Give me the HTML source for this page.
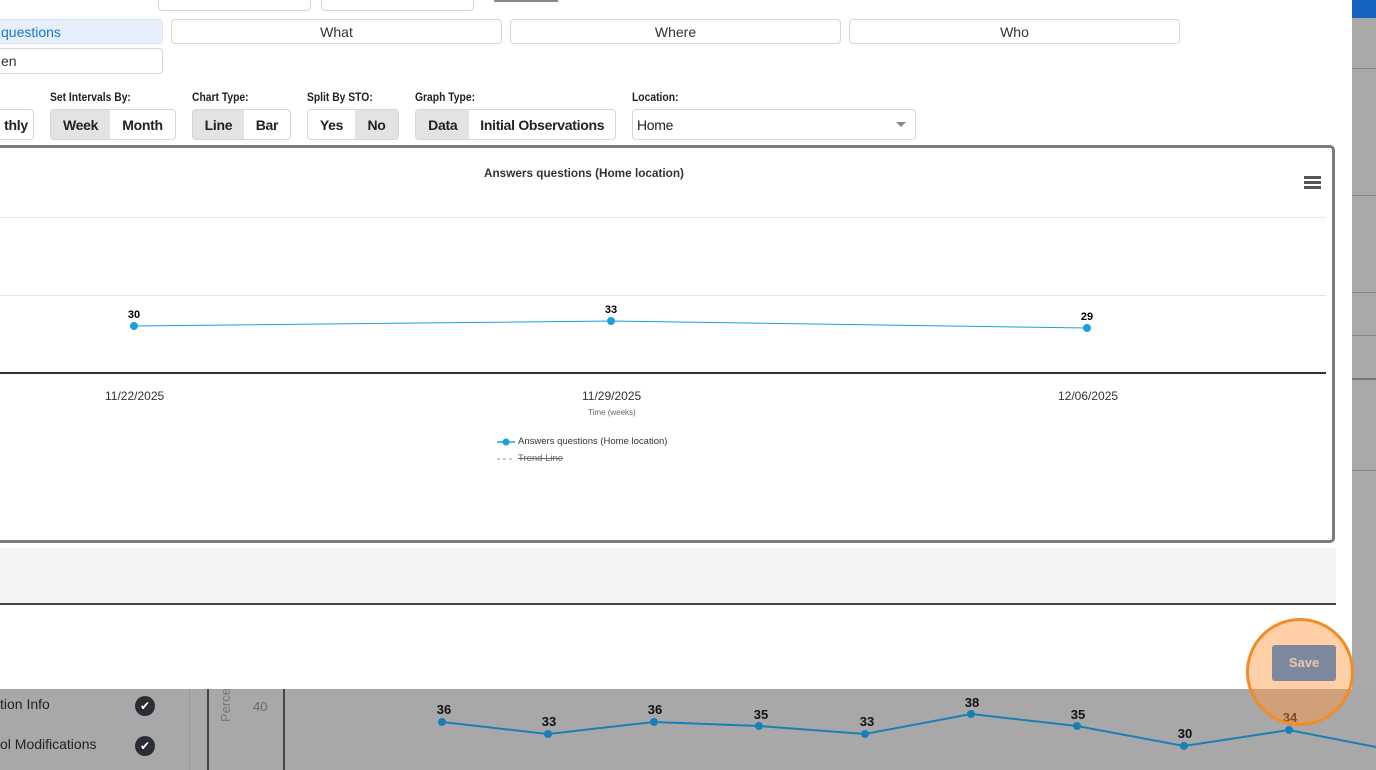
<!DOCTYPE html>
<html><head><meta charset="utf-8"><style>
*{box-sizing:border-box;margin:0;padding:0}
body{width:1376px;height:770px;overflow:hidden;position:relative;background:#a9a9a9;font-family:"Liberation Sans",sans-serif;color:#222}
.abs{position:absolute}
.modal{position:absolute;left:0;top:0;width:1352px;height:689px;background:#fff}
.box{position:absolute;border:1px solid #d6d6d6;border-radius:4px;background:#fff;font-size:14px;text-align:center;line-height:24px;color:#333}
.lbl{position:absolute;font-size:12px;font-weight:bold;color:#222;top:90px;transform:scaleX(.86);transform-origin:left}
.grp{position:absolute;top:109px;height:31px;border:1px solid #d6d6d6;border-radius:4px;display:flex;overflow:hidden;font-size:14px;font-weight:bold}
.grp span{display:flex;align-items:center;justify-content:center;height:100%;letter-spacing:-.3px}
.on{background:#e3e3e3}
</style></head><body>
<div class="abs" style="left:1352px;top:0;width:24px;height:18px;background:#1565c0"></div>
<div class="abs" style="left:1352px;top:68px;width:24px;height:1px;background:#888"></div>
<div class="abs" style="left:1352px;top:195px;width:24px;height:1px;background:#888"></div>
<div class="abs" style="left:1352px;top:292px;width:24px;height:1px;background:#888"></div>
<div class="abs" style="left:1352px;top:335px;width:24px;height:1px;background:#888"></div>
<div class="abs" style="left:1352px;top:378px;width:24px;height:2px;background:#777"></div>
<div class="abs" style="left:1352px;top:470px;width:24px;height:1px;background:#888"></div>
<div class="abs" style="left:0;top:689px;width:1376px;height:81px;background:#a8a8a8"></div>
<div class="abs" style="left:0;top:696px;font-size:14px;color:#222">tion Info</div>
<div class="abs" style="left:0;top:736px;font-size:14px;color:#222">ol Modifications</div>
<div class="abs" style="left:135px;top:696px;width:20px;height:20px;border-radius:50%;background:#2a2d33;color:#fff;font-size:12px;text-align:center;line-height:20px">✔</div>
<div class="abs" style="left:135px;top:736px;width:20px;height:20px;border-radius:50%;background:#2a2d33;color:#fff;font-size:12px;text-align:center;line-height:20px">✔</div>
<div class="abs" style="left:189px;top:689px;width:1px;height:81px;background:#999"></div>
<div class="abs" style="left:207px;top:689px;width:2px;height:81px;background:#444"></div>
<div class="abs" style="left:283px;top:689px;width:2px;height:81px;background:#444"></div>
<div class="abs" style="left:218px;font-size:13px;color:#777;transform:rotate(-90deg);transform-origin:left top;top:722px">Perce</div>
<div class="abs" style="left:253px;top:699px;font-size:13px;color:#666">40</div>
<svg class="abs" style="left:0;top:689px" width="1376" height="81">
<polyline fill="none" stroke="#1a7fb5" stroke-width="2" points="442,33 548,45 654,33 759,37 865,45 971,25 1077,37 1184,57 1289,41 1376,58"/>
<g fill="#1a7fb5"><circle cx="442" cy="33" r="4"/><circle cx="548" cy="45" r="4"/><circle cx="654" cy="33" r="4"/><circle cx="759" cy="37" r="4"/><circle cx="865" cy="45" r="4"/><circle cx="971" cy="25" r="4"/><circle cx="1077" cy="37" r="4"/><circle cx="1184" cy="57" r="4"/><circle cx="1289" cy="41" r="4"/></g>
<g font-size="13" font-weight="bold" text-anchor="middle" fill="#111" font-family="Liberation Sans"><text x="444" y="25">36</text><text x="549" y="37">33</text><text x="655" y="25">36</text><text x="761" y="30">35</text><text x="867" y="37">33</text><text x="972" y="18">38</text><text x="1078" y="30">35</text><text x="1185" y="49">30</text><text x="1290" y="33">34</text></g>
</svg>
<div class="modal">
<div class="box" style="left:158px;top:-10px;width:153px;height:21px"></div>
<div class="box" style="left:321px;top:-10px;width:153px;height:21px"></div>
<div class="abs" style="left:494px;top:0;width:64px;height:2px;background:#888"></div>
<div class="box" style="left:-10px;top:19px;width:173px;height:25px;background:#e6effa;color:#1976d2;border-color:#d8e3f0;text-align:left;padding-left:10px">questions</div>
<div class="box" style="left:171px;top:19px;width:331px;height:25px">What</div>
<div class="box" style="left:510px;top:19px;width:331px;height:25px">Where</div>
<div class="box" style="left:849px;top:19px;width:331px;height:25px">Who</div>
<div class="box" style="left:-10px;top:48px;width:173px;height:26px;text-align:left;padding-left:10px">en</div>
<div class="lbl" style="left:50px">Set Intervals By:</div>
<div class="lbl" style="left:192px">Chart Type:</div>
<div class="lbl" style="left:307px">Split By STO:</div>
<div class="lbl" style="left:415px">Graph Type:</div>
<div class="lbl" style="left:632px">Location:</div>
<div class="grp" style="left:-10px;width:44px"><span style="width:44px;padding-left:8px">thly</span></div>
<div class="grp" style="left:50px;width:126px"><span class="on" style="width:60px">Week</span><span style="width:66px">Month</span></div>
<div class="grp" style="left:192px;width:99px"><span class="on" style="width:52px">Line</span><span style="width:47px">Bar</span></div>
<div class="grp" style="left:307px;width:92px"><span style="width:48px">Yes</span><span class="on" style="width:44px">No</span></div>
<div class="grp" style="left:415px;width:201px"><span class="on" style="width:54px">Data</span><span style="width:147px">Initial Observations</span></div>
<div class="grp" style="left:632px;width:284px;font-weight:normal"><span style="padding-left:4px;justify-content:flex-start;width:250px">Home</span></div>
<div class="abs" style="left:896px;top:122px;border-left:5px solid transparent;border-right:5px solid transparent;border-top:5px solid #888"></div>
<div class="abs" style="left:-10px;top:145px;width:1345px;height:398px;border:3px solid #787c82;border-radius:5px"></div>
<div class="abs" style="left:484px;top:166px;font-size:12px;font-weight:bold;color:#333;transform:scaleX(.98);transform-origin:left">Answers questions (Home location)</div>
<div class="abs" style="left:1304px;top:176px;width:17px;height:3px;background:#555;box-shadow:0 5px 0 #555,0 10px 0 #555"></div>
<div class="abs" style="left:0;top:217px;width:1326px;height:1px;background:#e6e6e6"></div>
<div class="abs" style="left:0;top:295px;width:1326px;height:1px;background:#e6e6e6"></div>
<div class="abs" style="left:0;top:372px;width:1326px;height:2px;background:#333"></div>
<svg class="abs" style="left:0;top:300px" width="1330" height="40">
<polyline fill="none" stroke="#1aa0dc" stroke-width="1" points="134,26 611,21 1087,28"/>
<g fill="#1aa0dc"><circle cx="134" cy="26" r="4"/><circle cx="611" cy="21" r="4"/><circle cx="1087" cy="28" r="4"/></g>
<g font-size="11" font-weight="bold" text-anchor="middle" font-family="Liberation Sans"><text x="134" y="18">30</text><text x="611" y="13">33</text><text x="1087" y="20">29</text></g>
</svg>
<div class="abs" style="left:105px;top:389px;font-size:12px;color:#333">11/22/2025</div>
<div class="abs" style="left:582px;top:389px;font-size:12px;color:#333">11/29/2025</div>
<div class="abs" style="left:1058px;top:389px;font-size:12px;color:#333">12/06/2025</div>
<div class="abs" style="left:588px;top:408px;font-size:8px;color:#666">Time (weeks)</div>
<svg class="abs" style="left:496px;top:436px" width="20" height="30"><line x1="1" y1="6" x2="19" y2="6" stroke="#1aa0dc" stroke-width="1.5"/><circle cx="10" cy="6" r="3.5" fill="#1aa0dc"/><line x1="1" y1="23" x2="19" y2="23" stroke="#999" stroke-dasharray="3,3"/></svg>
<div class="abs" style="left:518px;top:436px;font-size:9.5px;color:#333">Answers questions (Home location)</div>
<div class="abs" style="left:518px;top:453px;font-size:9.5px;color:#666;text-decoration:line-through">Trend Line</div>
<div class="abs" style="left:0;top:548px;width:1336px;height:57px;background:#f4f4f4;border-bottom:2px solid #3e4250"></div>
</div>
<div class="abs" style="left:1246px;top:618px;width:108px;height:108px;border-radius:50%;background:rgba(255,150,60,0.45);border:3px solid #f28c28"></div>
<div class="abs" style="left:1272px;top:645px;width:64px;height:36px;background:#7e889e;border-radius:3px;color:#e8c9a8;font-size:13px;font-weight:bold;text-align:center;line-height:36px">Save</div>
</body></html>
